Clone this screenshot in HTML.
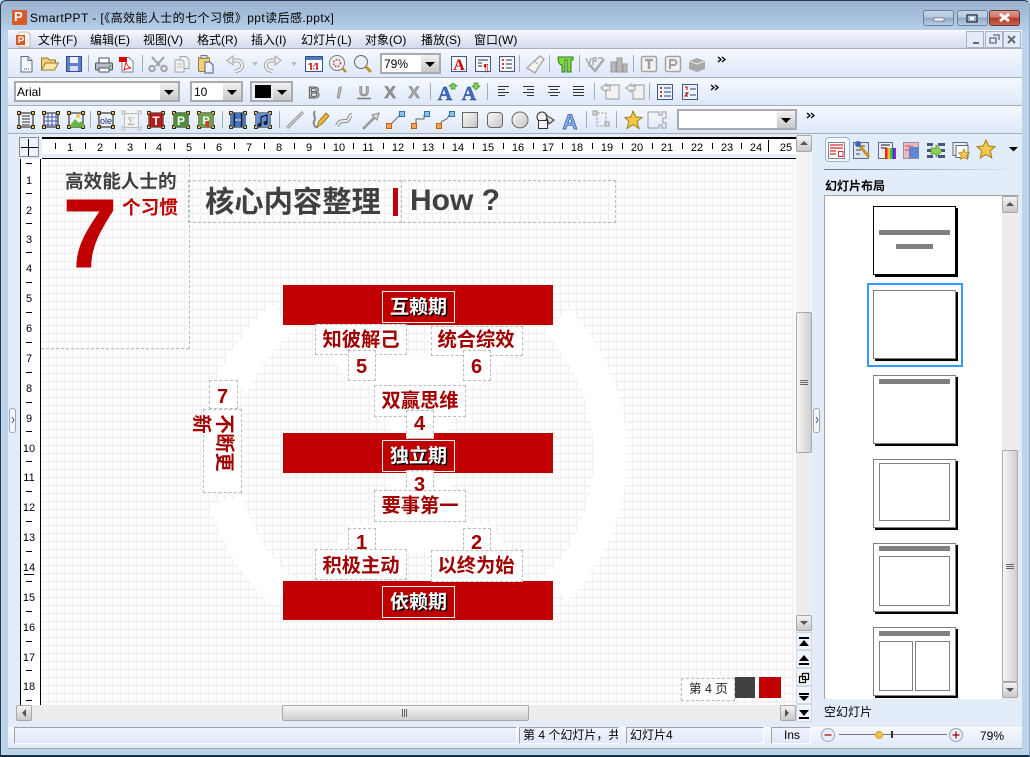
<!DOCTYPE html>
<html lang="zh"><head><meta charset="utf-8"><title>SmartPPT</title>
<style>
*{box-sizing:border-box}
html,body{margin:0;padding:0}
body{width:1030px;height:757px;overflow:hidden;position:relative;background:#bcd4ea;font:12px "Liberation Sans","Noto Sans CJK SC",sans-serif;color:#000}
.a,.t,.cb,.bx,.lb,.sb,.st,.btn{position:absolute}
.t{white-space:nowrap;line-height:16px}
#frame{left:0;top:0;width:1030px;height:757px;background:linear-gradient(#9ab4d1 0,#a6bfdb 15px,#bad2ec 32px,#bcd4ea 60px);border:1px solid #2a3a4a;border-right-color:#8fa9c4;border-radius:6px 6px 0 0;border-bottom:2px solid #14303c}
.tb{position:absolute;left:8px;width:1014px;background:linear-gradient(#f5f9ff,#dde8f8);border-bottom:1px solid #a5adb8}
.cb{border:2px solid #a8abb0;background:#fff}
.cb b{position:absolute;right:0;top:0;bottom:0;width:18px;background:linear-gradient(#f1f1f1,#c8c8c8)}
.cb b:after{content:"";position:absolute;left:4px;top:7px;border:5px solid transparent;border-top:5px solid #000;border-bottom:0}
.hn,.vn{position:absolute;font-size:11px;line-height:12px;width:24px;text-align:center;margin-left:-12px}
.hn{top:142px}.vn{left:29px;margin-top:-6px}
#slide{left:41px;top:159px;width:755px;height:546px;background-color:#fff;background-image:linear-gradient(#f0f0f0 1px,#f9f9f9 1px,#f9f9f9 2px,transparent 2px),linear-gradient(90deg,#f0f0f0 1px,#f9f9f9 1px,#f9f9f9 2px,transparent 2px);background-size:8px 8px;background-position:7px 6px;overflow:hidden}
.bx{border:1px dashed #bcbcbc;background:#fff}
.bar{position:absolute;left:283px;width:270px;background:#c00000}
.lb{left:382px;width:73px;height:32px;border:1px solid #f0f0f0;color:#fff;font-weight:700;font-size:19px;line-height:27px;text-align:center;text-shadow:1.5px 1.5px 0 #000;font-family:"Noto Sans CJK SC",sans-serif}
.r{position:absolute;z-index:2;color:#a00000;font:700 19.3px/26px "Noto Sans CJK SC",sans-serif;white-space:nowrap;text-align:center}
.n{position:absolute;z-index:2;color:#a00000;font:700 20px/24px "Liberation Sans",sans-serif;width:27px;text-align:center}
.sb{background:linear-gradient(90deg,#f5f5f5,#cfcfcf);border:1px solid #a8a8a8;border-radius:2px}
.btn{width:16px;height:18px;background:#f0f5fc;border:1px solid #cfd8e6}
.st{background:linear-gradient(#eff4fd,#dfe9f9);border-top:1px solid #a3a3a3;border-left:1px solid #a3a3a3;border-right:1px solid #fff;border-bottom:1px solid #fff;height:17px;top:727px;line-height:15px;padding-left:3px;white-space:nowrap;overflow:hidden}
.th{position:absolute;left:873px;width:83px;height:69px;background:#fff;border:1px solid #808080;box-shadow:2px 2px 0 #000}
.th i{position:absolute;display:block}
.g{background:#808080}.o{border:1px solid #808080}
svg{position:absolute;left:0;top:0}
</style></head><body>
<div class="a" id="frame"></div>

<!-- title -->
<div class="a" style="left:12px;top:10px;width:15px;height:15px;background:#dc5a25;border-radius:1px"></div>
<div class="t" style="left:14px;top:9px;color:#fff;font-weight:700;font-size:13px">P</div>
<div class="t" style="left:30px;top:10px;font-size:12px;letter-spacing:.42px">SmartPPT - [《高效能人士的七个习惯》ppt读后感.pptx]</div>
<div class="a" style="left:923px;top:10px;width:31px;height:16px;border:1px solid #6b7f96;border-radius:3px;background:linear-gradient(#c4d5e8 0,#b5c8de 45%,#8da7c3 50%,#b9cee4 100%)"></div>
<div class="a" style="left:957px;top:10px;width:31px;height:16px;border:1px solid #6b7f96;border-radius:3px;background:linear-gradient(#c4d5e8 0,#b5c8de 45%,#8da7c3 50%,#b9cee4 100%)"></div>
<div class="a" style="left:989px;top:10px;width:31px;height:16px;border:1px solid #6e3a34;border-radius:3px;background:linear-gradient(#dc9a8c 0,#cf7766 45%,#b23a27 50%,#c9624f 100%)"></div>

<!-- menu -->
<div class="a" style="left:8px;top:30px;width:1014px;height:19px;background:linear-gradient(#fbfcfe,#eef2fa 20%,#d2dbed);border-bottom:1px solid #aab2c0"></div>
<div class="t" style="left:38px;top:32px">文件(F)</div>
<div class="t" style="left:90px;top:32px">编辑(E)</div>
<div class="t" style="left:143px;top:32px">视图(V)</div>
<div class="t" style="left:197px;top:32px">格式(R)</div>
<div class="t" style="left:251px;top:32px">插入(I)</div>
<div class="t" style="left:301px;top:32px">幻灯片(L)</div>
<div class="t" style="left:365px;top:32px">对象(O)</div>
<div class="t" style="left:421px;top:32px">播放(S)</div>
<div class="t" style="left:474px;top:32px">窗口(W)</div>
<div class="a" style="left:966px;top:31px;width:18px;height:17px;background:#e4ecf8;border:1px solid #a6b4c6"></div>
<div class="a" style="left:985px;top:31px;width:18px;height:17px;background:#e4ecf8;border:1px solid #a6b4c6"></div>
<div class="a" style="left:1003px;top:31px;width:18px;height:17px;background:#e4ecf8;border:1px solid #a6b4c6"></div>

<!-- toolbars -->
<div class="tb" style="top:49px;height:29px"></div>
<div class="tb" style="top:78px;height:28px"></div>
<div class="tb" style="top:106px;height:28px"></div>
<!-- content bg -->
<div class="a" style="left:8px;top:134px;width:1014px;height:593px;background:#e3edf9"></div>
<div class="a" style="left:8px;top:727px;width:1014px;height:22px;background:linear-gradient(#f4f8fe,#e1eaf9);border-bottom:1px solid #a5a5a5;border-top:1px solid #fff"></div>

<div class="cb" style="left:380px;top:53px;width:61px;height:21px"><b></b></div>
<div class="t" style="left:384px;top:56px">79%</div>
<div class="cb" style="left:14px;top:81px;width:166px;height:21px"><b></b></div>
<div class="t" style="left:17px;top:84px">Arial</div>
<div class="cb" style="left:190px;top:81px;width:53px;height:21px"><b></b></div>
<div class="t" style="left:194px;top:84px">10</div>
<div class="cb" style="left:250px;top:81px;width:43px;height:21px;background:#eef2f8"><b></b></div>
<div class="a" style="left:255px;top:85px;width:16px;height:13px;background:#000"></div>
<div class="cb" style="left:677px;top:109px;width:120px;height:21px"><b></b></div>

<!-- rulers -->
<div class="a" style="left:42px;top:137px;width:754px;height:22px;background:linear-gradient(#fff 0,#fff 15px,#e3edf9 15px);border-top:2px solid #000;border-bottom:1px solid #000"></div>
<div class="a" style="left:19px;top:137px;width:20px;height:20px;background:#edf2fa;border:1px solid #8d8d8d"></div>
<div class="a" style="left:20px;top:159px;width:21px;height:546px;background:#fff;border-left:1px solid #000;border-right:1px solid #000"></div>
<div class="hn" style="left:70px">1</div><div class="hn" style="left:100px">2</div><div class="hn" style="left:130px">3</div><div class="hn" style="left:159px">4</div><div class="hn" style="left:189px">5</div><div class="hn" style="left:219px">6</div><div class="hn" style="left:249px">7</div><div class="hn" style="left:279px">8</div><div class="hn" style="left:309px">9</div><div class="hn" style="left:339px">10</div><div class="hn" style="left:368px">11</div><div class="hn" style="left:398px">12</div><div class="hn" style="left:428px">13</div><div class="hn" style="left:458px">14</div><div class="hn" style="left:488px">15</div><div class="hn" style="left:518px">16</div><div class="hn" style="left:548px">17</div><div class="hn" style="left:577px">18</div><div class="hn" style="left:607px">19</div><div class="hn" style="left:637px">20</div><div class="hn" style="left:667px">21</div><div class="hn" style="left:697px">22</div><div class="hn" style="left:727px">23</div><div class="hn" style="left:756px">24</div><div class="hn" style="left:786px">25</div>
<div class="vn" style="top:181px">1</div><div class="vn" style="top:211px">2</div><div class="vn" style="top:240px">3</div><div class="vn" style="top:269px">4</div><div class="vn" style="top:299px">5</div><div class="vn" style="top:329px">6</div><div class="vn" style="top:359px">7</div><div class="vn" style="top:389px">8</div><div class="vn" style="top:419px">9</div><div class="vn" style="top:449px">10</div><div class="vn" style="top:478px">11</div><div class="vn" style="top:508px">12</div><div class="vn" style="top:538px">13</div><div class="vn" style="top:568px">14</div><div class="vn" style="top:598px">15</div><div class="vn" style="top:628px">16</div><div class="vn" style="top:658px">17</div><div class="vn" style="top:687px">18</div>

<!-- slide -->
<div class="a" id="slide"></div>
<svg width="1030" height="757" viewBox="0 0 1030 757" style="clip-path:inset(159px 234px 52px 41px)">
<g fill="none" stroke="#fff" stroke-width="33">
<path d="M556 320A195 195 0 0 1 556 590"/>
<path d="M283 318A195 195 0 0 0 232 385"/>
<path d="M226 500A195 195 0 0 0 283 593"/>
</g>
<g fill="#fff">
<path d="M375 380L465 380L445 440L395 440Z"/>
<path d="M375 525L465 525L445 470L395 470Z"/>
<path d="M330 354L510 354L480 385L350 385Z"/>
<path d="M350 525L490 525L510 552L330 552Z"/>
</g>
</svg>

<div class="a" style="left:189px;top:159px;height:190px;border-left:1px dashed #bcbcbc"></div>
<div class="a" style="left:41px;top:348px;width:148px;border-top:1px dashed #bcbcbc"></div>
<div class="t" style="left:65px;top:170px;color:#404040;font:700 18.6px/22px 'Noto Sans CJK SC',sans-serif">高效能人士的</div>
<div class="t" style="left:63px;top:181px;color:#c00000;font:700 97px/106px 'Liberation Sans',sans-serif;-webkit-text-stroke:1px #c00000">7</div>
<div class="t" style="left:122px;top:196px;color:#c00000;font:700 18.6px/22px 'Noto Sans CJK SC',sans-serif">个习惯</div>
<div class="a" style="left:188px;top:180px;width:428px;height:43px;border:1px dashed #bcbcbc"></div>
<div class="a" style="left:401px;top:180px;height:43px;border-left:1px dashed #bcbcbc"></div>
<div class="t" style="left:205px;top:183px;color:#404040;font:700 29.3px/34px 'Noto Sans CJK SC',sans-serif">核心内容整理</div>
<div class="a" style="left:393px;top:188px;width:5px;height:28px;background:#c00000"></div>
<div class="t" style="left:410px;top:183px;color:#404040;font:700 30px/36px 'Liberation Sans',sans-serif">How ?</div>

<div class="bar" style="top:285px;height:40px"></div>
<div class="bar" style="top:433px;height:40px"></div>
<div class="bar" style="top:581px;height:39px"></div>

<div class="bx" style="left:315px;top:324px;width:92px;height:31px"></div>
<div class="r" style="left:315px;top:325px;width:92px">知彼解己</div>
<div class="bx" style="left:431px;top:326px;width:92px;height:30px"></div>
<div class="r" style="left:431px;top:325px;width:90px">统合综效</div>
<div class="bx" style="left:348px;top:350px;width:28px;height:31px"></div><div class="n" style="left:348px;top:355px">5</div>
<div class="bx" style="left:463px;top:350px;width:28px;height:31px"></div><div class="n" style="left:463px;top:355px">6</div>
<div class="bx" style="left:374px;top:385px;width:92px;height:32px"></div>
<div class="r" style="left:374px;top:386px;width:92px">双赢思维</div>
<div class="bx" style="left:406px;top:410px;width:28px;height:29px;border-bottom-style:solid"></div><div class="n" style="left:406px;top:412px">4</div>
<div class="bx" style="left:209px;top:380px;width:29px;height:29px"></div><div class="n" style="left:209px;top:385px">7</div>
<div class="bx" style="left:203px;top:409px;width:39px;height:84px"></div>
<div class="r" style="left:213px;top:411px;width:26px;transform:rotate(90deg)">不</div>
<div class="r" style="left:213px;top:430px;width:26px;transform:rotate(90deg)">断</div>
<div class="r" style="left:213px;top:449px;width:26px;transform:rotate(90deg)">更</div>
<div class="r" style="left:190px;top:411px;width:26px;transform:rotate(90deg)">新</div>
<div class="bx" style="left:406px;top:470px;width:28px;height:32px"></div><div class="n" style="left:406px;top:473px">3</div>
<div class="bx" style="left:374px;top:490px;width:92px;height:32px"></div>
<div class="r" style="left:374px;top:491px;width:92px">要事第一</div>
<div class="bx" style="left:348px;top:528px;width:28px;height:31px"></div><div class="n" style="left:348px;top:531px">1</div>
<div class="bx" style="left:463px;top:528px;width:28px;height:31px"></div><div class="n" style="left:463px;top:531px">2</div>
<div class="bx" style="left:315px;top:549px;width:92px;height:31px"></div>
<div class="r" style="left:315px;top:551px;width:92px">积极主动</div>
<div class="bx" style="left:431px;top:550px;width:92px;height:32px"></div>
<div class="r" style="left:431px;top:551px;width:90px">以终为始</div>

<div class="lb" style="top:291px">互赖期</div>
<div class="lb" style="top:440px">独立期</div>
<div class="lb" style="top:586px">依赖期</div>

<div class="bx" style="left:681px;top:678px;width:54px;height:23px"></div>
<div class="t" style="left:689px;top:681px;font-size:12.5px;color:#222">第 4 页</div>
<div class="a" style="left:735px;top:677px;width:20px;height:21px;background:#404040"></div>
<div class="a" style="left:759px;top:677px;width:22px;height:21px;background:#c00000"></div>

<!-- main scrollbars -->
<div class="a" style="left:796px;top:135px;width:17px;height:570px;background:#ededed"></div>
<div class="a" style="left:796px;top:152px;width:16px;height:160px;background:#f3f3f3"></div>
<div class="sb" style="left:796px;top:135px;width:16px;height:17px;background:linear-gradient(#f2f2f2,#c9c9c9)"></div>
<div class="sb" style="left:796px;top:312px;width:16px;height:141px"></div>
<div class="sb" style="left:796px;top:615px;width:16px;height:16px;background:linear-gradient(#f2f2f2,#c9c9c9)"></div>
<div class="btn" style="left:796px;top:632px"></div><div class="btn" style="left:796px;top:650px"></div><div class="btn" style="left:796px;top:668px"></div><div class="btn" style="left:796px;top:686px"></div><div class="btn" style="left:796px;top:704px"></div>
<div class="a" style="left:16px;top:705px;width:780px;height:16px;background:#ededed"></div>
<div class="sb" style="left:16px;top:705px;width:16px;height:16px;background:linear-gradient(#f2f2f2,#c9c9c9)"></div>
<div class="sb" style="left:282px;top:705px;width:247px;height:16px;background:linear-gradient(#f5f5f5,#cfcfcf)"></div>
<div class="sb" style="left:780px;top:705px;width:16px;height:16px;background:linear-gradient(#f2f2f2,#c9c9c9)"></div>
<div class="a" style="left:9px;top:408px;width:7px;height:25px;background:#f4f7fc;border:1px solid #9aa6b6;border-radius:3px"></div>
<div class="a" style="left:813px;top:408px;width:7px;height:25px;background:#f4f7fc;border:1px solid #9aa6b6;border-radius:3px"></div>

<!-- right panel -->
<div class="a" style="left:825px;top:137px;width:25px;height:25px;background:#f7faff;border:1px solid #9fb6cf;border-radius:4px"></div>
<div class="a" style="left:824px;top:169px;width:196px;height:1px;background:linear-gradient(90deg,#6d7886,#e3edf9)"></div>
<div class="t" style="left:825px;top:178px;font-weight:700;font-size:12px">幻灯片布局</div>
<div class="a" style="left:824px;top:195px;width:195px;height:504px;background:#fff;border:1px solid #a3a3a3;border-right:0;border-bottom:0"></div>
<div class="a" style="left:1002px;top:196px;width:17px;height:503px;background:#ededed"></div>
<div class="sb" style="left:1002px;top:196px;width:16px;height:17px;background:linear-gradient(#f2f2f2,#c9c9c9)"></div>
<div class="sb" style="left:1002px;top:450px;width:16px;height:232px"></div>
<div class="sb" style="left:1002px;top:682px;width:16px;height:16px;background:linear-gradient(#f2f2f2,#c9c9c9)"></div>
<div class="a" style="left:867px;top:283px;width:96px;height:84px;border:2px solid #3399ff"></div>
<div class="th" style="top:206px;border-color:#000"><i class="g" style="left:5px;top:23px;width:71px;height:5px"></i><i class="g" style="left:22px;top:37px;width:37px;height:5px"></i></div>
<div class="th" style="top:290px"></div>
<div class="th" style="top:375px"><i class="g" style="left:5px;top:3px;width:71px;height:5px"></i></div>
<div class="th" style="top:459px"><i class="o" style="left:5px;top:3px;width:71px;height:58px"></i></div>
<div class="th" style="top:543px"><i class="g" style="left:5px;top:2px;width:71px;height:5px"></i><i class="o" style="left:5px;top:12px;width:71px;height:50px"></i></div>
<div class="th" style="top:627px"><i class="g" style="left:5px;top:3px;width:71px;height:5px"></i><i class="o" style="left:5px;top:13px;width:34px;height:50px"></i><i class="o" style="left:41px;top:13px;width:35px;height:50px"></i></div>
<div class="t" style="left:824px;top:704px">空幻灯片</div>

<!-- status -->
<div class="st" style="left:14px;width:503px"></div>
<div class="st" style="left:519px;width:100px">第 4 个幻灯片，共</div>
<div class="st" style="left:626px;width:138px">幻灯片4</div>
<div class="st" style="left:771px;width:40px;padding-left:12px">Ins</div>
<div class="t" style="left:980px;top:728px;font-size:12px">79%</div>

<!-- icons -->
<svg width="1030" height="757" viewBox="0 0 1030 757" shape-rendering="geometricPrecision">
<defs>
<g id="fr"><rect x="2" y="2" width="14" height="14" fill="#eef2fb" stroke="#111"/><g fill="#f5c84a" stroke="#000" stroke-width=".8"><rect x=".5" y=".5" width="3" height="3"/><rect x="14.500" y=".5" width="3" height="3"/><rect x=".5" y="14.500" width="3" height="3"/><rect x="14.500" y="14.500" width="3" height="3"/></g></g>
</defs>
<!-- window controls -->
<rect x="934" y="18" width="10" height="3" fill="#fff" stroke="#5c6b7b" stroke-width=".7"/>
<rect x="967" y="15" width="10" height="7" fill="none" stroke="#1d2a38" stroke-width="1.2"/><rect x="970" y="17" width="4" height="3" fill="#fff"/>
<path d="M1000 14l9 7M1009 14l-9 7" stroke="#fff" stroke-width="2.8"/>
<path d="M973 43h6" stroke="#667" stroke-width="2"/>
<path d="M990 38h6v5h-6zM993 35h6v5" fill="none" stroke="#667" stroke-width="1.3"/>
<path d="M1008 36l7 7M1015 36l-7 7" stroke="#667" stroke-width="2"/>
<!-- menu icon -->
<path d="M19 32h9l2 3v12H19z" fill="#f8f4ee" stroke="#b9aa99" stroke-width=".7"/><rect x="16" y="35" width="9" height="10" fill="#d9572a"/><path d="M19 43v-6h2.500a1.500 1.500 0 0 1 0 3.500H19" fill="none" stroke="#fff" stroke-width="1.300"/>

<!-- toolbar 1 -->
<path d="M21 56.500h7l4 4v11.500h-11z" fill="#f5f7fc" stroke="#5d6a8c"/><path d="M28 56.500v4h4" fill="#d4ddee" stroke="#5d6a8c"/><path d="M24 69h5" stroke="#444" stroke-dasharray="1 1"/>
<path d="M41.500 70v-12h6l2 2h6v3" fill="#f3cf78" stroke="#9a7a30"/><path d="M41.500 70l4-7h13l-4 7z" fill="#fbe7a6" stroke="#9a7a30"/>
<rect x="66.500" y="56.500" width="15" height="15" fill="#5f80c8" stroke="#2f4d90"/><rect x="70" y="57" width="8" height="6" fill="#eef3fb"/><rect x="70" y="66" width="8" height="5" fill="#d4ddee"/>
<path d="M88.500 55v17M142.500 55v17M519.500 55v17M549.500 55v17M579.500 55v17M633.500 55v17" stroke="#a5adb8"/>
<rect x="95.500" y="63" width="17" height="7" rx="1" fill="#b7bcc5" stroke="#4d5460"/><rect x="99" y="58" width="10" height="5" fill="#fff" stroke="#4d5460"/><rect x="99" y="68" width="10" height="4" fill="#fff" stroke="#4d5460"/><circle cx="110" cy="66" r="1" fill="#3a3"/>
<path d="M122 57.500h7l4 4v10.500h-11z" fill="#fff" stroke="#77839b"/><rect x="119" y="57" width="8" height="5" fill="#d00"/><path d="M124 70c1-5 2-7 2-8 1 3 2 5 5 6-3 0-5 1-7 2z" fill="none" stroke="#d22"/>
<g fill="none" stroke="#a5a5a5" stroke-width="2.200"><path d="M152 57l8 9M164 57l-8 9"/><circle cx="152" cy="68.500" r="2.700"/><circle cx="164" cy="68.500" r="2.700"/></g>
<g fill="#f2f2f2" stroke="#a5a5a5"><path d="M180 56.500h6l3 3v9h-9z"/><path d="M175 60h7l2 2v10h-9z"/><path d="M177 64h5M177 67h5" stroke="#bbb"/></g>
<rect x="198.500" y="57.500" width="11" height="14" rx="1" fill="#f3cf78" stroke="#9a7a30"/><rect x="201" y="55.500" width="6" height="3" fill="#ddd" stroke="#777"/><path d="M205 62h5l3 3v8h-8z" fill="#eef3fb" stroke="#44598a"/>
<path d="M231 60.500h5a5 5 0 0 1 2 10l-3 1" fill="none" stroke="#a5a5a5" stroke-width="4"/><path d="M231 60.500h5a5 5 0 0 1 2 10l-3 1" fill="none" stroke="#f0f0f0" stroke-width="2"/><path d="M233 56v9l-6-4.500z" fill="#eee" stroke="#a5a5a5"/>
<path d="M252 62h6l-3 4zM291 62h6l-3 4z" fill="#bbb"/>
<path d="M277 60.500h-5a5 5 0 0 0-2 10l3 1" fill="none" stroke="#a5a5a5" stroke-width="4"/><path d="M277 60.500h-5a5 5 0 0 0-2 10l3 1" fill="none" stroke="#f0f0f0" stroke-width="2"/><path d="M275 56v9l6-4.500z" fill="#eee" stroke="#a5a5a5"/>
<rect x="305.500" y="56.500" width="17" height="15" fill="#fff" stroke="#33558f"/><rect x="306" y="57" width="16" height="3" fill="#4d79bd"/><path d="M311 70v-7M317 70v-7" stroke="#c00" stroke-width="1.500"/><path d="M308.500 64.500l2-1M314.500 64.500l2-1" stroke="#c00"/><circle cx="314" cy="66" r=".7" fill="#c00"/><circle cx="314" cy="69" r=".7" fill="#c00"/>
<circle cx="337" cy="63" r="7.500" fill="#eef0f4" stroke="#777"/><circle cx="337" cy="63" r="3.500" fill="none" stroke="#b33" stroke-dasharray="1.500 1.500" stroke-width="1.500"/><path d="M342 68l4 4" stroke="#b98a20" stroke-width="2.500"/>
<circle cx="361" cy="62" r="6.500" fill="#e4f1fb" stroke="#666"/><path d="M366 67l5 5" stroke="#c8961f" stroke-width="3"/>
<rect x="451.500" y="56.500" width="15" height="15" fill="#f4f7fc" stroke="#44598a"/><text x="459" y="70" font-family="Liberation Serif" font-weight="700" font-size="16" fill="#c00" text-anchor="middle">A</text>
<rect x="475.500" y="56.500" width="15" height="15" fill="#f4f7fc" stroke="#44598a"/><path d="M478 60h10M478 63h4M478 66h4" stroke="#333"/><text x="486" y="71" font-family="Liberation Sans" font-size="10" fill="#c00" text-anchor="middle">¶</text>
<rect x="499.500" y="56.500" width="15" height="15" fill="#f4f7fc" stroke="#44598a"/><path d="M502 60h2M502 64h2M502 68h2" stroke="#c00" stroke-width="1.500"/><path d="M506 60h6M506 64h6M506 68h6" stroke="#333"/>
<path d="M540 56l4 3-6 9-3 5-8-5 3-3z" fill="#f2f2f2" stroke="#aaa" stroke-width="1.500"/><path d="M534 61l4 3" stroke="#aaa"/>
<path d="M558 57h15v3h-2v12h-4V60h-2v12h-3v-7c-3 0-4-3-4-8z" fill="#7fd93a" stroke="#2d7d1a"/>
<path d="M586 58l3 7 2-7M593 58v7M593 58h3v3h-3M598 58h5" fill="none" stroke="#aaa" stroke-width="1.500"/><path d="M590 65l5 6 9-12" fill="none" stroke="#aaa" stroke-width="2.500"/>
<path d="M611 62h5v10h-5zM617 58h5v14h-5zM623 64h4v8h-4z" fill="#b9b9b9" stroke="#999"/>
<rect x="641.500" y="56.500" width="15" height="15" rx="2" fill="#f2f2f2" stroke="#a5a5a5" stroke-width="1.500"/><path d="M645 60h8M649 60v9" stroke="#a0a0a0" stroke-width="2.500"/>
<rect x="665.500" y="56.500" width="15" height="15" rx="2" fill="#f2f2f2" stroke="#a5a5a5" stroke-width="1.500"/><path d="M670 69v-9h4a2.500 2.500 0 0 1 0 5h-4" fill="none" stroke="#a0a0a0" stroke-width="2"/>
<path d="M689 61l8-3 8 3v8l-8 3-8-3z" fill="#a8a8a8"/><path d="M689 61l8 3 8-3" stroke="#eee" fill="none"/>
<path d="M718 57l3 2.500-3 2.500M722 57l3 2.500-3 2.500M711 85l3 2.500-3 2.500M715 85l3 2.500-3 2.500M807 113l3 2.500-3 2.500M811 113l3 2.500-3 2.500" fill="none" stroke="#000" stroke-width="1.300"/>

<!-- toolbar 2 -->
<text x="314" y="98" font-family="Liberation Sans" font-weight="700" font-size="16" fill="#bbb" stroke="#555" stroke-width=".9" text-anchor="middle">B</text>
<text x="339" y="98" font-family="Liberation Sans" font-style="italic" font-weight="700" font-size="16" fill="#bbb" stroke="#777" stroke-width=".6" text-anchor="middle">I</text>
<text x="364" y="96" font-family="Liberation Sans" font-weight="700" font-size="14" fill="#bbb" stroke="#666" stroke-width=".6" text-anchor="middle">U</text><path d="M357 98.500h14" stroke="#777" stroke-width="1.500"/>
<text x="390" y="98" font-family="Liberation Sans" font-weight="700" font-size="17" fill="#999" stroke="#666" stroke-width=".5" text-anchor="middle">X</text>
<text x="414" y="98" font-family="Liberation Sans" font-weight="700" font-size="17" fill="#aaa" stroke="#777" stroke-width=".5" text-anchor="middle">X</text>
<path d="M430.500 83v17M487.500 83v17M594.500 83v17M649.500 83v17" stroke="#a5adb8"/>
<text x="445" y="100" font-family="Liberation Serif" font-weight="700" font-size="20" fill="#3f6fc0" stroke="#1e3f80" stroke-width=".4" text-anchor="middle">A</text>
<text x="469" y="100" font-family="Liberation Serif" font-weight="700" font-size="20" fill="#3f6fc0" stroke="#1e3f80" stroke-width=".4" text-anchor="middle">A</text>
<path d="M451 89v-3h-2l4-3 4 3h-2v3z" fill="#7fd24a" stroke="#3c8a28" stroke-width=".7"/>
<path d="M474 83v3h-2l4 4 4-4h-2v-3z" fill="#7fd24a" stroke="#3c8a28" stroke-width=".7"/>
<path d="M498 86.500h11M498 89.500h7M498 92.500h11M498 95.500h7M523 86.500h11M527 89.500h7M523 92.500h11M527 95.500h7M548 86.500h12M550 89.500h8M548 92.500h12M550 95.500h8M573 86.500h11M573 89.500h11M573 92.500h11M573 95.500h11" stroke="#333"/>
<g fill="#f2f2f2" stroke="#aaa" stroke-width="1.200"><path d="M606 85h13v14h-13z"/><path d="M601 88l5-4v2h4v4h-4v2z"/><path d="M633 85h11v14h-11z"/><path d="M626 88l5-4v2h4v4h-4v2z"/></g>
<rect x="657.500" y="84.500" width="15" height="15" fill="#eef3fb" stroke="#44598a"/><path d="M660 88h2M660 92h2M660 96h2" stroke="#a00" stroke-width="1.500"/><path d="M664 88h7M664 92h7M664 96h7" stroke="#23408a"/>
<rect x="682.500" y="84.500" width="15" height="15" fill="#eef3fb" stroke="#44598a"/><path d="M685 87h2v3M685 93h3l-3 3h3" stroke="#a00" fill="none"/><path d="M690 89h6M690 95h6" stroke="#23408a"/>

<!-- toolbar 3 -->
<use href="#fr" x="17" y="111"/><path d="M22 116h8M22 119h8M22 122h8M22 125h8" stroke="#333"/>
<use href="#fr" x="42" y="111"/><path d="M44 117h14M44 121h14M44 125h14M48 113v14M52 113v14M56 113v14" stroke="#4457a0"/>
<use href="#fr" x="67" y="111"/><path d="M69 127l6-8 4 4 2-2 4 6z" fill="#69b63f"/><circle cx="78" cy="116" r="2" fill="#f5c84a"/>
<use href="#fr" x="97" y="111"/><text x="106" y="124" font-family="Liberation Sans" font-size="9" fill="#1d2f6f" text-anchor="middle">ole</text>
<rect x="124.500" y="113.500" width="14" height="14" fill="#f3f3f3" stroke="#bbb"/><path d="M122 111h3v3h-3zM138 111h3v3h-3zM122 127h3v3h-3zM138 127h3v3h-3z" fill="#eee" stroke="#bbb"/><text x="131" y="125" font-family="Liberation Serif" font-size="12" fill="#aaa" text-anchor="middle">Σ</text>
<use href="#fr" x="147" y="111"/><rect x="149" y="113" width="14" height="14" fill="#b21d1d"/><text x="156" y="125" font-family="Liberation Sans" font-weight="700" font-size="12" fill="#fff" text-anchor="middle">T</text>
<use href="#fr" x="172" y="111"/><rect x="174" y="113" width="14" height="14" fill="#4f8e3a"/><text x="181" y="125" font-family="Liberation Sans" font-weight="700" font-size="12" fill="#fff" text-anchor="middle">P</text>
<use href="#fr" x="197" y="111"/><rect x="199" y="113" width="14" height="14" fill="#6f9f4a"/><text x="206" y="124" font-family="Liberation Sans" font-weight="700" font-size="11" fill="#fff" text-anchor="middle">P</text><rect x="206" y="121" width="3" height="6" fill="#d33"/>
<path d="M90.500 111v17M222.500 111v17M279.500 111v17M586.500 111v17M616.500 111v17" stroke="#a5adb8"/>
<use href="#fr" x="229" y="111"/><rect x="231" y="113" width="14" height="14" fill="#4a76c0"/><path d="M234.500 113v14M241.500 113v14" stroke="#123" stroke-width="1.500"/><path d="M235 120h6" stroke="#def"/>
<use href="#fr" x="254" y="111"/><rect x="256" y="113" width="14" height="14" fill="#6a8fd0"/><path d="M261 125v-8l6-2v8" fill="none" stroke="#123" stroke-width="1.300"/><circle cx="259.500" cy="125" r="2" fill="#123"/><circle cx="265.500" cy="123" r="2" fill="#123"/>
<path d="M287 128l16-16" stroke="#888" stroke-width="3"/><path d="M287 128l16-16" stroke="#ddd" stroke-width="1.200"/>
<path d="M315 111c-3 4 2 7-1 10-1 4 1 7 4 6" fill="none" stroke="#888" stroke-width="2"/><path d="M317 127l2-6 7-8 3 3-7 8z" fill="#f2b33d" stroke="#9a7a30"/>
<path d="M337 126c3-8 9-3 11-6s2-5 4-5" fill="none" stroke="#888" stroke-width="4"/><path d="M337 126c3-8 9-3 11-6s2-5 4-5" fill="none" stroke="#eee" stroke-width="2"/>
<path d="M363 128l11-11-2-2 7-2-2 7-2-2-11 11z" fill="#ddd" stroke="#888"/>
<g fill="none"><path d="M391 124l9-9" stroke="#666"/><rect x="386.500" y="123.500" width="5" height="5" fill="#f3a55e" stroke="#c15f12"/><rect x="399.500" y="111.500" width="5" height="5" fill="#8fc2ee" stroke="#2b6fb5"/>
<path d="M416 124v-5h8v-4" stroke="#666"/><rect x="411.500" y="123.500" width="5" height="5" fill="#f3a55e" stroke="#c15f12"/><rect x="424.500" y="111.500" width="5" height="5" fill="#8fc2ee" stroke="#2b6fb5"/>
<path d="M441 124c0-5 6-2 8-9" stroke="#666"/><rect x="436.500" y="123.500" width="5" height="5" fill="#f3a55e" stroke="#c15f12"/><rect x="449.500" y="111.500" width="5" height="5" fill="#8fc2ee" stroke="#2b6fb5"/></g>
<defs><linearGradient id="sh" x1="0" y1="0" x2="1" y2="1"><stop offset="0" stop-color="#fafafa"/><stop offset="1" stop-color="#c4c4c4"/></linearGradient></defs>
<rect x="462.500" y="112.500" width="15" height="15" fill="url(#sh)" stroke="#666"/>
<rect x="487.500" y="112.500" width="15" height="15" rx="3.500" fill="url(#sh)" stroke="#666"/>
<circle cx="520" cy="120" r="8" fill="url(#sh)" stroke="#666"/>
<circle cx="542" cy="117" r="5" fill="#f2f2f2" stroke="#333"/><path d="M546 115l8 5-5 4z" fill="#ddd" stroke="#333"/><rect x="538.500" y="120.500" width="9" height="8" fill="#f2f2f2" stroke="#333"/>
<text x="570" y="129" font-family="Liberation Sans" font-weight="700" font-size="21" fill="#86aee8" stroke="#2e5ca8" stroke-width=".7" text-anchor="middle">A</text>
<path d="M597 113h9v9M597 113v13h9" fill="none" stroke="#aaa" stroke-dasharray="3 1"/><path d="M593 111h4v4h-4zM605 122h4v4h-4z" fill="#ddd" stroke="#999"/>
<path d="M633 111l3 6 6 .5-5 4 2 7-6-4-6 4 2-7-4-4 6-.5z" fill="#f5c84a" stroke="#a67a1a"/>
<path d="M648 112h11v3h3v-3h4v6h-3v5h3v5h-4v-3h-3v3h-11z" fill="none" stroke="#aaa" stroke-width="1.200"/>

<!-- ruler marks -->
<path d="M55.500 143v6M85.500 143v6M115.500 143v6M145.500 143v6M174.500 143v6M204.500 143v6M234.500 143v6M264.500 143v6M294.500 143v6M324.500 143v6M353.500 143v6M383.500 143v6M413.500 143v6M443.500 143v6M473.500 143v6M503.500 143v6M533.500 143v6M562.500 143v6M592.500 143v6M622.500 143v6M652.500 143v6M682.500 143v6M712.500 143v6M741.500 143v6M768.500 140v12" stroke="#000"/>
<path d="M26 163.500h6M26 193.500h6M26 223.500h6M26 252.500h6M26 282.500h6M26 312.500h6M26 342.500h6M26 372.500h6M26 402.500h6M26 431.500h6M26 461.500h6M26 491.500h6M26 521.500h6M26 551.500h6M24 574.500h10M26 581.500h6M26 611.500h6M26 641.500h6M26 670.500h6M26 700.500h6" stroke="#000"/>
<path d="M28.500 139v17M21 147.500h17" stroke="#000"/>

<!-- right panel icons -->
<rect x="828.500" y="142.500" width="16" height="16" fill="#fff" stroke="#7c8698"/><path d="M830 145h13M830 148h13M830 151h6M830 154h6" stroke="#d52a2a" stroke-width="1.200"/><rect x="838.500" y="151.500" width="4.500" height="5" fill="none" stroke="#d52a2a"/>
<rect x="853.500" y="142.500" width="15" height="16" fill="#dce5f3" stroke="#5c6b8a"/><path d="M856 146h9M856 150h5M856 154h4" stroke="#445"/><path d="M859 145l10 12" stroke="#c9961f" stroke-width="3"/><circle cx="858" cy="144" r="3" fill="#3d66c0"/>
<rect x="878.500" y="142.500" width="14" height="16" fill="#eef0f5" stroke="#5c6b8a"/><path d="M881 145h9M881 148h6" stroke="#445" stroke-width="1.300"/>
<g><rect x="885" y="148" width="2.500" height="11" fill="#e22"/><rect x="887.500" y="148" width="2.500" height="11" fill="#fb2"/><rect x="890" y="148" width="2.500" height="11" fill="#3c3"/><rect x="892.500" y="148" width="2" height="11" fill="#33d"/><rect x="894.500" y="148" width="1.500" height="11" fill="#a2c"/></g>
<rect x="903.500" y="142.500" width="15" height="16" fill="#f0b8b8" stroke="#8a94ad"/><rect x="909" y="147" width="10" height="11" fill="#5f86cf"/><path d="M905 146h8M905 150h4" stroke="#d46"/>
<path d="M927 143h6v3h-6zM927 149h4v3h-4zM927 155h6v3h-6zM938 143h7v3h-7zM941 149h4v3h-4zM938 155h7v3h-7z" fill="#46557e"/><path d="M931 148h5v-3l6 6-6 6v-3h-5z" fill="#8ed04f" stroke="#4d8f2a" stroke-width=".7"/>
<rect x="953" y="142.500" width="14" height="13" fill="#eef0f5" stroke="#5c6b8a"/><rect x="956" y="145.500" width="12" height="12" fill="#fff" stroke="#5c6b8a"/><path d="M964 149l1.800 3.500 3.700.4-2.700 2.600.8 3.900-3.600-1.900-3.400 1.900.7-3.900-2.700-2.600 3.700-.4z" fill="#f5c84a" stroke="#a67a1a" stroke-width=".7"/>
<path d="M986 140l2.800 6 6.200.6-4.700 4.300 1.500 7-5.800-3.500-5.800 3.500 1.500-7-4.700-4.300 6.200-.6z" fill="#f5c84a" stroke="#a67a1a"/>
<path d="M1009 147h9l-4.500 4.500z"/>

<!-- scroll glyphs -->
<g fill="#555"><path d="M800 145l4-4 4 4zM800 621l4 4 4-4zM1006 206l4-4 4 4zM1006 688l4 4 4-4zM26 709l-4 4 4 4zM785 709l4 4-4 4z"/></g>
<path d="M800 380.500h8M800 382.500h8M800 384.500h8M1006 564.500h8M1006 566.500h8M1006 568.500h8M402.500 709v8M404.500 709v8M406.500 709v8" stroke="#666"/>
<g fill="#000"><path d="M799 637h10v2h-10zM799 646l5-6 5 6z"/><path d="M799 661l5-6 5 6zM799 663h10v2h-10z"/><path d="M799 693h10v2h-10zM799 696h10l-5 5z"/><path d="M799 710h10l-5 6zM799 717h10v2h-10z"/></g>
<path d="M802.500 673.500h6v6h-6zM799.500 676.500h6v6h-6z" fill="#fff" stroke="#000" stroke-width="1.200"/>
<path d="M12 417l2 3-2 3M816 417l2 3-2 3" fill="none" stroke="#556"/>

<!-- zoom slider -->
<circle cx="828" cy="735" r="6.500" fill="#e6edf7" stroke="#9aa8ba"/><path d="M824.500 735h7" stroke="#a00" stroke-width="1.200"/>
<circle cx="956" cy="735" r="6.500" fill="#e6edf7" stroke="#9aa8ba"/><path d="M952.500 735h7M956 731.500v7" stroke="#a00" stroke-width="1.200"/>
<path d="M839 734.500h108" stroke="#777"/><path d="M892 731v7" stroke="#333" stroke-width="2"/><circle cx="879" cy="735" r="3.500" fill="#f6c24f" stroke="#d9a028"/>
</svg>
</body></html>
